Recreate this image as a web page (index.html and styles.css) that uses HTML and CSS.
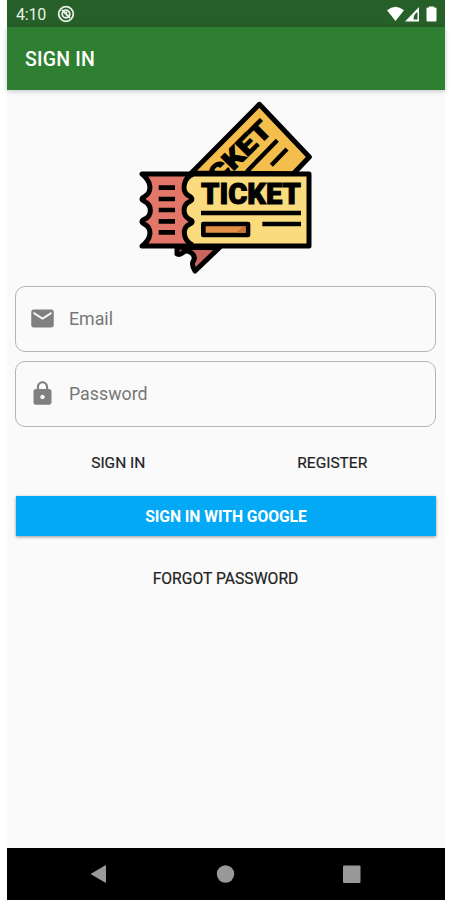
FILE: index.html
```
<!DOCTYPE html>
<html lang="en">
<head>
<meta charset="utf-8">
<title>Sign in</title>
<link rel="stylesheet" href="styles.css">
</head>
<body>
<div class="phone">
  <div class="status">
    <span class="time">4:10</span>
    <svg class="sync" viewBox="0 0 18 18" fill="none" stroke="#e8f0e8"><circle cx="9" cy="9" r="7.3" stroke-width="1.8"/><circle cx="9" cy="9" r="3.8" stroke-width="1.9"/><path d="M5 5l8 8M8 9l2-2" stroke-width="1.8"/></svg>
    <svg class="signals" viewBox="0 0 50 16"><path fill="#fff" d="M0 4.2Q8.500-2.800 17 4.200L8.500 15z"/><path fill="#fff" fill-rule="evenodd" d="M18 15.500 32 1v14.500zM26.500 13.500h4V6q-4 2-4 7.500z"/><path fill="#fff" d="M42 1.500V.5h5v1h1.500q1 0 1 1v12q0 1-1 1h-8q-1 0-1-1v-12q0-1 1-1z"/></svg>
  </div>
  <header class="bar"><h1>SIGN IN</h1></header>
  <main>
    <svg class="ticket" viewBox="0 0 570 555">
      <g stroke="#000" stroke-linejoin="round" stroke-linecap="round">
        <path fill="#ca655d" stroke-width="15" d="M141 456V477Q151 481 158 473Q172 462 186 475Q198 487 189 500Q184 510 195 528L268 458z"/>
        <path fill="#f3be4b" stroke-width="15" d="M184 234 388 28 538 186 490 236z"/>
        <path stroke-width="13" stroke-linecap="butt" d="M442 136 350 230M471 162 424 211"/>
      </g>
      <text class="lettering" font-size="79" text-anchor="end" textLength="318" lengthAdjust="spacingAndGlyphs" transform="translate(430 109) rotate(-45)">TICKET</text>
      <path fill="#e27669" d="M38 238H190V452H38Q62 432 62 415T38 380Q62 362 62 345T38 312Q65 292 62 272T38 238z"/>
      <path fill="#fadb7e" d="M188 238H537V452H188Q162 432 162 415T184 380Q162 362 162 345T184 312Q158 292 162 272T188 238z"/>
      <g fill="none" stroke="#000" stroke-width="15" stroke-linejoin="round">
        <path d="M36 237H537V453H36C62 434 70 402 43 387Q29 380 43 373C67 362 67 331 43 319Q29 312 43 305C69 290 63 258 36 237z"/>
        <path d="M188 238C160 249 154 287 174 301Q195 312 178 320C157 330 157 361 178 373Q195 380 178 388C154 400 160 438 188 450"/>
        <path stroke-width="14" d="M86 278h49M86 312h49M86 345h49M86 379h49M86 412h49M213 354H513M397 387H513"/>
        <path fill="#e59145" stroke-width="14" d="M220 387H354V420H220z"/>
      </g>
      <path fill="#c86f3c" d="M318 413 339 394H347V413z"/>
      <text class="lettering" x="213" y="326" font-size="88" textLength="300" lengthAdjust="spacingAndGlyphs">TICKET</text>
    </svg>
    <div class="field email">
      <svg class="icon" viewBox="0 0 24 24"><path d="M20 4H4c-1.100 0-1.990.9-1.990 2L2 18c0 1.100.9 2 2 2h16c1.100 0 2-.9 2-2V6c0-1.100-.9-2-2-2zm0 4l-8 5-8-5V6l8 5 8-5v2z"/></svg>
      <span class="label">Email</span>
    </div>
    <div class="field password">
      <svg class="icon" viewBox="0 0 24 24"><path d="M18 8h-1V6c0-2.760-2.240-5-5-5S7 3.240 7 6v2H6c-1.100 0-2 .9-2 2v10c0 1.100.9 2 2 2h12c1.100 0 2-.9 2-2V10c0-1.100-.9-2-2-2zm-6 9c-1.100 0-2-.9-2-2s.9-2 2-2 2 .9 2 2-.9 2-2 2zm3.100-9H8.900V6c0-1.710 1.390-3.100 3.100-3.100s3.100 1.390 3.100 3.100v2z"/></svg>
      <span class="label">Password</span>
    </div>
    <div class="actions">
      <span class="signin">SIGN IN</span>
      <span class="register">REGISTER</span>
    </div>
    <div class="google">SIGN IN WITH GOOGLE</div>
    <div class="forgot">FORGOT PASSWORD</div>
  </main>
  <nav>
    <svg viewBox="0 0 438 52" fill="#999"><path d="M83.500 26 98 17.500q1-.5 1 .5v16q0 1-1 .5z"/><circle cx="218.500" cy="26" r="8.700"/><rect x="336" y="17.500" width="17.500" height="17.500" rx="1"/></svg>
  </nav>
</div>
</body>
</html>
```
FILE: styles.css
```
* { box-sizing: border-box; }
body { margin: 0; background: #fff; font-family: Roboto, sans-serif; }
.phone { width: 438px; height: 900px; margin-left: 7px; background: #fafafa; display: flex; flex-direction: column; }
.status { height: 27px; background: #265f27; display: flex; align-items: center; padding: 1px 8px 0 9px; }
.time { color: #e8f0e8; font-size: 16px; letter-spacing: -.2px; width: 41px; }
.sync { width: 18px; height: 18px; }
.signals { width: 50px; height: 16px; margin-left: auto; }
.bar { height: 63px; background: #2f7f33; padding-left: 18px; display: flex; align-items: center; box-shadow: 0 1px 5px rgba(0,0,40,.22); }
h1 { margin: 1px 0 0; color: #fff; font-size: 19.5px; font-weight: 500; letter-spacing: .2px; }
main { flex: 1; display: flex; flex-direction: column; padding: 5px 9px 0 8px; }
.ticket { width: 190px; height: 185px; margin: 0 0 6px 115px; flex: none; }
.lettering { font-family: Roboto, sans-serif; font-weight: 900; fill: #000; stroke: #000; stroke-width: 3px; }
.field { height: 66px; flex: none; border: 1px solid #b5b5b5; border-radius: 10px; display: flex; align-items: center; padding: 0 0 2px 13px; margin-bottom: 9px; }
.password { margin-bottom: 0; }
.icon { width: 27px; height: 27px; fill: #808080; margin-right: 13px; }
.label { color: #777; font-size: 17.8px; }
.actions { height: 69px; display: grid; grid-template-columns: 1fr 1fr; align-items: center; padding: 3px 2px 0 0; font-size: 15.5px; color: #222; text-align: center; -webkit-text-stroke: .2px #222; }
.signin { padding-right: 3px; }
.register { padding-left: 6px; }
.google { height: 40px; margin-left: 1px; background: #03a9f4; color: #fff; display: flex; align-items: center; justify-content: center; font-size: 15.7px; font-weight: 700; letter-spacing: -.05px; box-shadow: 0 1px 3px rgba(0,0,0,.4); }
.forgot { margin-top: 33px; text-align: center; line-height: 20px; font-size: 15.7px; color: #222; -webkit-text-stroke: .2px #222; }
nav { height: 52px; background: #000; }
nav svg { display: block; width: 438px; height: 52px; }
```
